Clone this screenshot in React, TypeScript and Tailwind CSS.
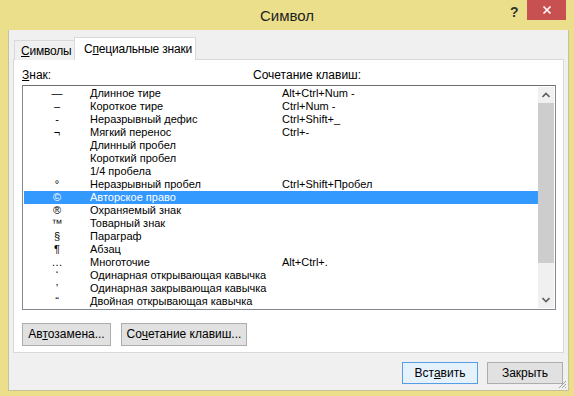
import React from "react";

type Row = { s: string; n: string; k: string; sel?: boolean };

const rows: Row[] = [
  { s: "—", n: "Длинное тире", k: "Alt+Ctrl+Num -" },
  { s: "–", n: "Короткое тире", k: "Ctrl+Num -" },
  { s: "-", n: "Неразрывный дефис", k: "Ctrl+Shift+_" },
  { s: "¬", n: "Мягкий перенос", k: "Ctrl+-" },
  { s: "", n: "Длинный пробел", k: "" },
  { s: "", n: "Короткий пробел", k: "" },
  { s: "", n: "1/4 пробела", k: "" },
  { s: "°", n: "Неразрывный пробел", k: "Ctrl+Shift+Пробел" },
  { s: "©", n: "Авторское право", k: "", sel: true },
  { s: "®", n: "Охраняемый знак", k: "" },
  { s: "™", n: "Товарный знак", k: "" },
  { s: "§", n: "Параграф", k: "" },
  { s: "¶", n: "Абзац", k: "" },
  { s: "…", n: "Многоточие", k: "Alt+Ctrl+." },
  { s: "‘", n: "Одинарная открывающая кавычка", k: "" },
  { s: "’", n: "Одинарная закрывающая кавычка", k: "" },
  { s: "“", n: "Двойная открывающая кавычка", k: "" },
];

export default function App() {
  return (
    <div className="w-[574px] h-[396px] bg-[#ebdf8c] flex flex-col overflow-hidden font-['Liberation_Sans',Arial,sans-serif] text-black">
      {/* Title bar */}
      <div className="relative h-[30px] shrink-0">
        <div className="absolute inset-x-0 top-[6px] text-center text-[15px] leading-[20px] text-[#1e1e1e]">
          Символ
        </div>
        <div className="absolute left-[510px] top-[3px] text-[14px] font-bold leading-[18px] text-[#333]">?</div>
        <div className="absolute left-[527px] top-0 w-[39px] h-[20px] bg-[#c75050] flex items-center justify-center">
          <svg width="10" height="10" viewBox="0 0 10 10">
            <path d="M1.5 1.5 L8.5 8.5 M8.5 1.5 L1.5 8.5" stroke="#fff" strokeWidth="1.6" />
          </svg>
        </div>
      </div>

      {/* Content */}
      <div className="relative ml-[8px] w-[561px] h-[361px] bg-[#f0f0f0] border-l border-r border-b border-[#c8c09a] px-[4px] flex flex-col">
        {/* Tabs */}
        <div className="h-[30px] flex items-end pl-[1px] relative z-10">
          <div className="h-[20px] w-[60px] border-t border-l border-[#d9d9d9] bg-[#f0f0f0] text-[12px] leading-[18px] pl-[6px] pt-[1px] whitespace-nowrap tracking-[-0.2px]">
            <span className="underline">С</span>имволы
          </div>
          <div className="h-[23px] w-[122px] border-t border-l border-r border-[#d9d9d9] bg-white text-[12px] leading-[18px] pl-[9px] pt-[2px] whitespace-nowrap tracking-[-0.2px]">
            С<span className="underline">п</span>ециальные знаки
          </div>
        </div>

        {/* Panel */}
        <div className="-mt-[1px] h-[294px] border border-[#d9d9d9] bg-white flex flex-col pl-[8px] pr-[7px] pt-[7px]">
          <div className="h-[16px] flex text-[12px] leading-[16px]">
            <div className="w-[231px]">
              <span className="underline">З</span>нак:
            </div>
            <div>Сочетание клавиш:</div>
          </div>
          <div className="mt-[2px] h-[225px] w-[534px] border border-[#828790] border-t-[#6e6e6e] p-[1px] flex">
            <div className="flex-1 flex flex-col">
              {rows.map((r, i) => (
                <div
                  key={i}
                  className={
                    "h-[13px] flex text-[11px] leading-[13px] whitespace-nowrap " +
                    (r.sel ? "bg-[#3399ff] text-white" : "")
                  }
                >
                  <div className="w-[66px] text-center">{r.s}</div>
                  <div className="w-[192px]">{r.n}</div>
                  <div>{r.k}</div>
                </div>
              ))}
            </div>
            <div className="w-[16px] bg-[#f0f0f0] flex flex-col">
              <div className="h-[16px] flex items-center justify-center">
                <svg width="8" height="6" viewBox="0 0 8 6">
                  <path d="M0.5 5 L4 1.5 L7.5 5" stroke="#606060" strokeWidth="1.6" fill="none" />
                </svg>
              </div>
              <div className="h-[160px] bg-[#cdcdcd]" />
              <div className="flex-1" />
              <div className="h-[16px] flex items-center justify-center">
                <svg width="8" height="6" viewBox="0 0 8 6">
                  <path d="M0.5 1 L4 4.5 L7.5 1" stroke="#606060" strokeWidth="1.6" fill="none" />
                </svg>
              </div>
            </div>
          </div>
          <div className="mt-[13px] flex gap-[10px]">
            <div className="h-[23px] w-[89px] bg-[#e1e1e1] border border-[#adadad] text-[12px] leading-[21px] text-center whitespace-nowrap">
              Ав<span className="underline">т</span>озамена...
            </div>
            <div className="h-[23px] w-[126px] bg-[#e1e1e1] border border-[#adadad] text-[12px] leading-[21px] text-center whitespace-nowrap">
              Со<span className="underline">ч</span>етание клавиш...
            </div>
          </div>
        </div>

        {/* Bottom buttons */}
        <div className="mt-[9px] flex justify-end gap-[9px] pr-[1px]">
          <div className="h-[22px] w-[76px] bg-[#e5f1fb] border border-[#569de5] text-[12px] leading-[20px] text-center">
            Вст<span className="underline">а</span>вить
          </div>
          <div className="h-[22px] w-[76px] bg-[#e1e1e1] border border-[#adadad] text-[12px] leading-[20px] text-center">
            Закрыть
          </div>
        </div>

        {/* Resize grip */}
        <svg className="absolute right-[1px] bottom-[1px]" width="10" height="10" viewBox="0 0 10 10">
          <path d="M9 2 L2 9 M9 5 L5 9 M9 8 L8 9" stroke="#a0a0a0" strokeWidth="1" />
        </svg>
      </div>
    </div>
  );
}
